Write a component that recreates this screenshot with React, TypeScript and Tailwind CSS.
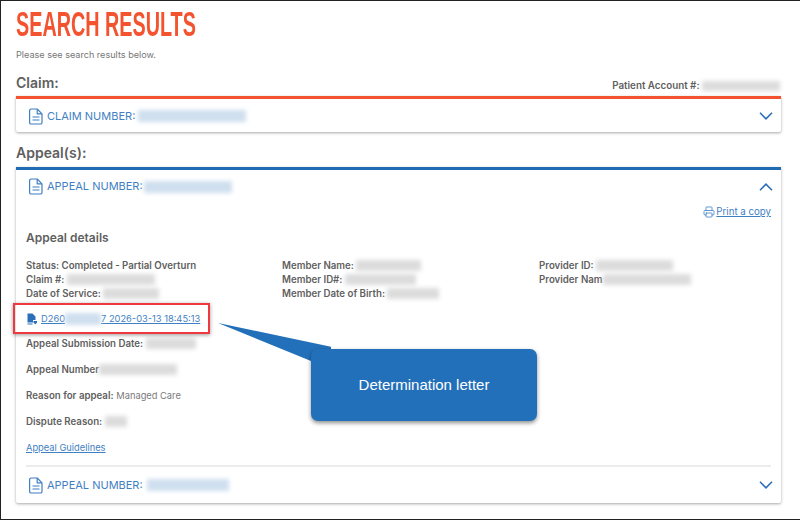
import React from 'react';
import { Printer } from 'lucide-react';

const Blur: React.FC<{ w: number; tone?: 'gray' | 'blue'; className?: string }> = ({ w, tone = 'gray', className = '' }) => (
  <span
    style={{ width: w }}
    className={`inline-block h-[10px] align-middle blur-[2px] ${tone === 'gray' ? 'bg-[#dcdcdc]' : 'bg-[#cfdfef]'} ${className}`}
  />
);

const DocIcon = () => (
  <svg className="w-[14px] h-[17px] mr-[4px]" viewBox="0 0 14 17" fill="none" stroke="currentColor" strokeWidth="1.2" strokeLinejoin="round">
    <path d="M2.2 1h6l4.8 4.8v8.6a1.6 1.6 0 0 1-1.6 1.6H2.2a1.6 1.6 0 0 1-1.6-1.6V2.6A1.6 1.6 0 0 1 2.2 1z" />
    <path d="M8.2 1v4.8H13" />
    <path d="M3.5 9h7M3.5 12h7" />
  </svg>
);

const Chevron: React.FC<{ up?: boolean }> = ({ up }) => (
  <svg className="w-[14px] h-[8px] text-[#2a6fb8]" viewBox="0 0 14 8" fill="none" stroke="currentColor" strokeWidth="1.6">
    <polyline points={up ? '1,7.2 7,1.2 13,7.2' : '1,0.8 7,6.8 13,0.8'} />
  </svg>
);

const NumberRow: React.FC<{ label: string; w: number; open?: boolean; gap?: string }> = ({ label, w, open, gap = 'ml-[3px]' }) => (
  <div className="flex items-center justify-between">
    <div className="flex items-center text-[#3f7fc4] text-[11px]">
      <DocIcon />
      <span>{label}</span>
      <Blur w={w} tone="blue" className={`h-[12px] ${gap}`} />
    </div>
    <Chevron up={open} />
  </div>
);

const Field: React.FC<{ label: string; w: number }> = ({ label, w }) => (
  <div className="h-[14px] leading-[14px] whitespace-nowrap">
    {label} <Blur w={w} className="h-[11px]" />
  </div>
);

export default function App() {
  return (
    <div
      className="relative w-[800px] h-[520px] overflow-hidden bg-white border border-[#222222] border-r-0 pl-[15px] pr-[19px] text-[#5f5f5f]"
      style={{ fontFamily: 'Inter, "Liberation Sans", sans-serif' }}
    >
      <h1
        className="h-[41px] pt-[5px] text-[35px] leading-[35px] font-bold text-[#f4532f] whitespace-nowrap origin-left scale-x-[0.565]"
        style={{ fontFamily: '"Liberation Sans Narrow", "Liberation Sans", sans-serif' }}
      >
        SEARCH RESULTS
      </h1>
      <p className="mt-[6px] h-[14px] text-[9.1px] leading-[14px] text-[#777777]">Please see search results below.</p>

      <div className="mt-[10px] h-[24px] flex items-end justify-between">
        <span className="text-[14px] leading-[20px] font-semibold pb-[3px]">Claim:</span>
        <span className="text-[9.8px] font-semibold leading-[12px] pb-[4px] pr-[1px] whitespace-nowrap">
          Patient Account #: <Blur w={78} />
        </span>
      </div>

      <div className="h-[36px] border-t-[3px] border-[#f4532f] rounded-b-[2px] bg-white shadow-[0_1px_3px_rgba(0,0,0,0.35)] pl-[13px] pr-[8px] pt-[1px] flex flex-col justify-center">
        <NumberRow label="CLAIM NUMBER:" w={108} />
      </div>

      <div className="mt-[11px] h-[24px] text-[14px] leading-[20px] font-semibold">Appeal(s):</div>

      <div className="h-[336px] border-t-[3px] border-[#1f6cb5] rounded-b-[2px] bg-white shadow-[0_1px_3px_rgba(0,0,0,0.35)] pl-[10px] pr-[10px]">
        <div className="pt-[8px] pl-[3px] -mr-[2px]">
          <NumberRow label="APPEAL NUMBER:" w={88} open gap="ml-[1px]" />
        </div>

        <div className="mt-[10px] flex justify-end items-center text-[9.7px] text-[#3f7fc4]">
          <Printer className="w-[12px] h-[12px] mr-[1px]" strokeWidth={1.6} />
          <span className="underline">Print a copy</span>
        </div>

        <div className="mt-[10px] h-[16px] text-[12px] leading-[16px] font-semibold">Appeal details</div>

        <div className="mt-[13px] grid grid-cols-[256px_257px_1fr] text-[9.7px] font-semibold">
          <div>
            <div className="h-[14px] leading-[14px]">Status: Completed - Partial Overturn</div>
            <Field label="Claim #:" w={88} />
            <Field label="Date of Service:" w={56} />
          </div>
          <div>
            <Field label="Member Name:" w={65} />
            <Field label="Member ID#:" w={71} />
            <Field label="Member Date of Birth:" w={52} />
          </div>
          <div>
            <Field label="Provider ID:" w={77} />
            <div className="h-[14px] leading-[14px] whitespace-nowrap flex items-center">
              Provider Nam
              <Blur w={88} className="h-[11px]" />
            </div>
          </div>
        </div>

        <div className="mt-[11px] h-[14px] flex items-center text-[9.3px] text-[#3f7fc4] whitespace-nowrap">
          <a className="flex items-center underline">
            <svg className="w-[12px] h-[12px] mr-[3px] text-[#2a6fb8]" viewBox="0 0 12 12" fill="currentColor">
              <path d="M1.5 0.5h5l3 3V7H7v2.5H1.5z" />
              <path d="M7.5 8h3.5v1.5L9.3 11.5 7.5 9.5z" />
              <path d="M1.5 10.5h5v1h-5z" />
            </svg>
            <span>D260</span>
            <Blur w={36} tone="blue" className="h-[12px]" />
            <span>7 2026-03-13 18:45:13</span>
          </a>
        </div>

        <div className="mt-[11px] h-[14px] leading-[14px] text-[9.7px] font-semibold whitespace-nowrap">
          Appeal Submission Date: <Blur w={50} className="h-[11px]" />
        </div>
        <div className="mt-[12px] h-[14px] leading-[14px] text-[9.7px] font-semibold whitespace-nowrap flex items-center">
          Appeal Number
          <Blur w={78} className="h-[11px]" />
        </div>
        <div className="mt-[12px] h-[14px] leading-[14px] text-[9.7px] whitespace-nowrap">
          <span className="font-semibold">Reason for appeal:</span> <span className="text-[9.3px] text-[#7a7a7a]">Managed Care</span>
        </div>
        <div className="mt-[12px] h-[14px] leading-[14px] text-[9.7px] font-semibold whitespace-nowrap">
          Dispute Reason: <Blur w={22} className="h-[11px]" />
        </div>
        <div className="mt-[12px] h-[14px] leading-[14px] text-[9.3px] text-[#3f7fc4] underline">Appeal Guidelines</div>

        <div className="mt-[10px] pt-[10px] border-t-2 border-[#ececec] pl-[3px]">
          <div className="-mr-[2px]">
            <NumberRow label="APPEAL NUMBER:" w={82} gap="ml-[4px]" />
          </div>
        </div>
      </div>

      {/* annotation overlays */}
      <div className="absolute left-[12px] top-[302px] w-[197px] h-[31px] border-2 border-[#ee3a3f] shadow-[0_1px_4px_rgba(0,0,0,0.4)]" />
      <svg className="absolute left-[200px] top-[310px] w-[130px] h-[60px]" viewBox="0 0 130 60">
        <polygon points="17,12 141,38 110,50" fill="#2370ba" />
      </svg>
      <div className="absolute left-[310px] top-[348px] w-[226px] h-[72px] rounded-[7px] bg-[#2370ba] shadow-[0_2px_4px_rgba(0,0,0,0.45)] flex items-center justify-center text-white text-[15px]" style={{ fontFamily: '"Liberation Sans", sans-serif' }}>
        Determination letter
      </div>
    </div>
  );
}
